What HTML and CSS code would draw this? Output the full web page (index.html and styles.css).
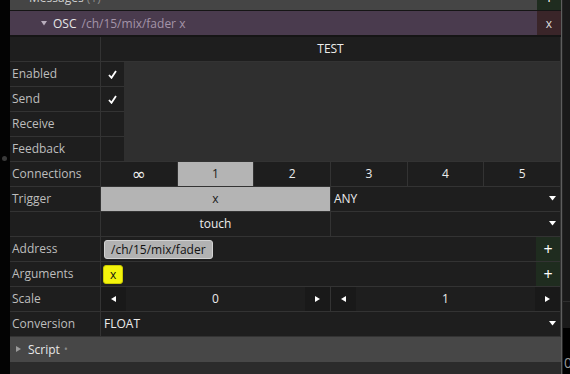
FILE: index.html
```html
<!DOCTYPE html>
<html>
<head>
<meta charset="utf-8">
<link rel="stylesheet" href="styles.css">
</head>
<body>
<div class="screen">
  <div class="edge-left"><span class="dot"></span></div>
  <div class="panel">
    <div class="msg-head">
      <span class="msg-title">Messages <span class="dim">(1)</span></span>
      <span class="btn-add top">+</span>
    </div>
    <div class="osc-head">
      <svg class="tri-down" width="6" height="5" viewBox="0 0 6 5"><path d="M0 0H6L3 4.5Z" fill="#b9aebd"/></svg>
      <span class="osc-name">OSC</span>
      <span class="osc-path">/ch/15/mix/fader x</span>
      <span class="btn-x">x</span>
    </div>
    <div class="table">
      <div class="lbl"></div><div class="cell span center">TEST</div>

      <div class="lbl">Enabled</div><div class="chk"><svg width="9" height="9" viewBox="0 0 9 9"><path d="M1 5 L3.5 7.8 L8 1" fill="none" stroke="#fff" stroke-width="1.8"/></svg></div>
      <div class="gray-area"></div>
      <div class="lbl">Send</div><div class="chk"><svg width="9" height="9" viewBox="0 0 9 9"><path d="M1 5 L3.5 7.8 L8 1" fill="none" stroke="#fff" stroke-width="1.8"/></svg></div>
      <div class="lbl">Receive</div><div class="chk"></div>
      <div class="lbl">Feedback</div><div class="chk"></div>

      <div class="lbl">Connections</div>
      <div class="span conns">
        <div class="cell center inf">∞</div>
        <div class="cell center sel">1</div>
        <div class="cell center">2</div>
        <div class="cell center">3</div>
        <div class="cell center">4</div>
        <div class="cell center">5</div>
      </div>

      <div class="lbl">Trigger</div>
      <div class="span halves">
        <div class="cell center sel">x</div>
        <div class="cell select">ANY<svg class="caret" width="7" height="5" viewBox="0 0 7 5"><path d="M0 0H7L3.5 4.5Z" fill="#fff"/></svg></div>
      </div>

      <div class="lbl"></div>
      <div class="span halves">
        <div class="cell center">touch</div>
        <div class="cell select"><svg class="caret" width="7" height="5" viewBox="0 0 7 5"><path d="M0 0H7L3.5 4.5Z" fill="#fff"/></svg></div>
      </div>

      <div class="lbl">Address</div>
      <div class="span listrow">
        <div class="items"><span class="pill">/ch/15/mix/fader</span></div>
        <span class="btn-add">+</span>
      </div>

      <div class="lbl">Arguments</div>
      <div class="span listrow">
        <div class="items"><span class="pill yellow">x</span></div>
        <span class="btn-add">+</span>
      </div>

      <div class="lbl">Scale</div>
      <div class="span halves">
        <div class="num">
          <span class="arrow"><svg width="5" height="6" viewBox="0 0 5 6"><path d="M5 0V6L0 3Z" fill="#fff"/></svg></span>
          <span class="val">0</span>
          <span class="arrow"><svg width="5" height="6" viewBox="0 0 5 6"><path d="M0 0V6L5 3Z" fill="#fff"/></svg></span>
        </div>
        <div class="num">
          <span class="arrow"><svg width="5" height="6" viewBox="0 0 5 6"><path d="M5 0V6L0 3Z" fill="#fff"/></svg></span>
          <span class="val">1</span>
          <span class="arrow"><svg width="5" height="6" viewBox="0 0 5 6"><path d="M0 0V6L5 3Z" fill="#fff"/></svg></span>
        </div>
      </div>

      <div class="lbl">Conversion</div>
      <div class="cell span select">FLOAT<svg class="caret" width="7" height="5" viewBox="0 0 7 5"><path d="M0 0H7L3.5 4.5Z" fill="#fff"/></svg></div>
    </div>
    <div class="script-bar">
      <svg class="tri-right" width="5" height="6" viewBox="0 0 5 6"><path d="M0 0V6L5 3Z" fill="#9a9a9a"/></svg>
      <span class="script-name">Script</span>
      <span class="script-dot">•</span>
    </div>
    <div class="panel-bottom"></div>
  </div>
  <div class="edge-right">
    <div class="er-top"></div>
    <div class="er-mid"></div>
    <div class="er-bot"><span class="er-num">0</span></div>
  </div>
</div>
</body>
</html>
```

FILE: styles.css
```css
html, body {
  margin: 0;
  padding: 0;
  background: #000;
}
body {
  font-family: "Open Sans", "Noto Sans", "DejaVu Sans", sans-serif;
  font-size: 12px;
  color: #ececec;
  width: 570px;
  height: 374px;
  overflow: hidden;
}
.screen {
  display: flex;
  width: 570px;
  height: 374px;
}
.edge-left {
  width: 10px;
  flex: none;
  background: #030303;
  position: relative;
}
.dot {
  position: absolute;
  left: 2px;
  top: 156px;
  width: 5px;
  height: 5px;
  border-radius: 50%;
  background: #3a3a3a;
}
.panel {
  width: 551px;
  flex: none;
  display: flex;
  flex-direction: column;
  border-right: 1px solid #5e5e5e;
  background: #2b2b2b;
}
.msg-head {
  height: 10px;
  background: #454545;
  display: flex;
  align-items: flex-end;
  overflow: hidden;
  border-bottom: 1px solid #151515;
}
.msg-title {
  line-height: 24px;
  height: 24px;
  flex: none;
  padding-left: 19px;
  color: #d0d0d0;
}
.dim { color: #8a8a8a; }
.btn-add {
  width: 24px;
  align-self: stretch;
  flex: none;
  margin-left: auto;
  background: #1f2c1f;
  color: #fff;
  display: flex;
  align-items: center;
  justify-content: center;
  font-size: 16px;
  padding-bottom: 1px;
  box-sizing: border-box;
}
.btn-add.top {
  height: 24px;
  align-self: flex-end;
}
.osc-head {
  height: 24px;
  background: #4a3b4e;
  display: flex;
  align-items: center;
  border-bottom: 2px solid #151515;
}
.tri-down { margin-left: 31px; margin-right: 6px; }
.osc-name { color: #e6e6e6; }
.osc-path { color: #a494a8; margin-left: 5px; }
.btn-x {
  margin-left: auto;
  width: 24px;
  align-self: stretch;
  background: #3a2529;
  color: #ddd;
  display: flex;
  align-items: center;
  justify-content: center;
}
.table {
  display: grid;
  grid-template-columns: 90px 23px 435px;
  grid-auto-rows: 24px;
  gap: 1px;
  background: #333333;
  border-bottom: 1px solid #333333;
}
.lbl {
  background: #1e1e1e;
  color: #bdbdbd;
  padding-left: 2px;
  padding-bottom: 1px;
  display: flex;
  align-items: center;
}
.cell {
  background: #1e1e1e;
  display: flex;
  align-items: center;
  min-width: 0;
  padding-bottom: 1px;
}
.span { grid-column: 2 / -1; }
.center { justify-content: center; }
.chk {
  background: #1e1e1e;
  display: flex;
  align-items: center;
  justify-content: center;
}
.gray-area {
  grid-column: 3;
  grid-row: 2 / span 4;
  background: #2f2f2f;
  margin-left: -1px;
}
.conns {
  display: grid;
  grid-template-columns: repeat(6, 1fr);
  gap: 1px;
}
.inf { font-family: "DejaVu Sans", sans-serif; font-size: 17px; color: #f0f0f0; }
.sel {
  background: #b4b4b4;
  color: #1a1a1a;
}
.halves {
  display: grid;
  grid-template-columns: 1fr 1fr;
  gap: 1px;
}
.select {
  padding-left: 3px;
  padding-right: 4px;
}
.caret { margin-left: auto; }
.listrow {
  display: flex;
  background: #1e1e1e;
}
.items {
  flex: 1;
  display: flex;
  align-items: center;
  padding-left: 3px;
}
.listrow .btn-add { width: 24px; }
.pill {
  background: #b2b2b2;
  border: 1px solid #d2d2d2;
  border-radius: 3px;
  color: #111;
  height: 17px;
  line-height: 17px;
  padding: 0 6px;
}
.pill.yellow {
  background: #f3f30c;
  border-color: #c9c900;
  padding: 0 6px;
  margin-left: -1px;
}
.num {
  display: flex;
  background: #1e1e1e;
}
.arrow {
  width: 25px;
  flex: none;
  background: #191919;
  display: flex;
  align-items: center;
  justify-content: center;
}
.val {
  flex: 1;
  display: flex;
  align-items: center;
  justify-content: center;
  padding-bottom: 1px;
}
.script-bar {
  height: 24px;
  background: #474747;
  display: flex;
  align-items: center;
  padding-bottom: 1px;
}
.tri-right { margin-left: 6px; margin-right: 7px; }
.script-name { color: #e8e8e8; }
.script-dot { color: #8c8c8c; margin-left: 4px; font-size: 10px; }
.panel-bottom {
  flex: 1;
  background: #2b2b2b;
}
.edge-right {
  width: 8px;
  flex: none;
  display: flex;
  flex-direction: column;
  background: #1a1a1a;
  border-left: 1px solid #262626;
  box-sizing: border-box;
}
.er-top {
  height: 301px;
  border-bottom: 1px solid #2e2e2e;
}
.er-mid { height: 26px; }
.er-bot {
  flex: 1;
  background: #000;
  overflow: hidden;
  position: relative;
}
.er-num {
  position: absolute;
  left: 1px;
  top: 27px;
  color: #9a9a9a;
  font-size: 14px;
  line-height: 16px;
}
```
